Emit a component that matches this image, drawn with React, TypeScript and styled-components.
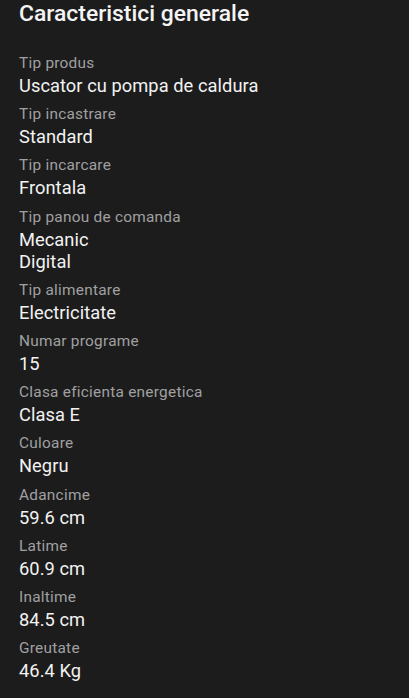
import React from "react";
import styled, { createGlobalStyle } from "styled-components";

const Global = createGlobalStyle`
  html, body { margin: 0; padding: 0; background: #1c1c1c; }
  body { font-family: Roboto, "Noto Sans", sans-serif; -webkit-font-smoothing: antialiased; }
`;

const Page = styled.div`
  min-height: 698px;
  background: #1c1c1c;
  padding: 0 19px;
  box-sizing: border-box;
`;

const Title = styled.h1`
  margin: 0;
  font-size: 22.9px;
  line-height: 28px;
  font-weight: 500;
  color: #f4f4f4;
`;

const List = styled.dl`
  margin: 25px 0 0;
  display: flex;
  flex-direction: column;
  gap: 7.2px;
`;

const Item = styled.div`
  display: flex;
  flex-direction: column;
  gap: 2px;
`;

const Label = styled.dt`
  font-size: 15.4px;
  letter-spacing: 0.25px;
  line-height: 20px;
  color: #a0a0a2;
`;

const Value = styled.dd`
  margin: 0;
  font-size: 18.3px;
  letter-spacing: 0.05px;
  line-height: 22px;
  color: #f2f2f2;
`;

const data: [string, string[]][] = [
  ["Tip produs", ["Uscator cu pompa de caldura"]],
  ["Tip incastrare", ["Standard"]],
  ["Tip incarcare", ["Frontala"]],
  ["Tip panou de comanda", ["Mecanic", "Digital"]],
  ["Tip alimentare", ["Electricitate"]],
  ["Numar programe", ["15"]],
  ["Clasa eficienta energetica", ["Clasa E"]],
  ["Culoare", ["Negru"]],
  ["Adancime", ["59.6 cm"]],
  ["Latime", ["60.9 cm"]],
  ["Inaltime", ["84.5 cm"]],
  ["Greutate", ["46.4 Kg"]],
];

export default function App() {
  return (
    <>
      <Global />
      <Page>
        <Title>Caracteristici generale</Title>
        <List>
          {data.map(([label, values]) => (
            <Item key={label}>
              <Label>{label}</Label>
              <Value>
                {values.map((v) => (
                  <div key={v}>{v}</div>
                ))}
              </Value>
            </Item>
          ))}
        </List>
      </Page>
    </>
  );
}
